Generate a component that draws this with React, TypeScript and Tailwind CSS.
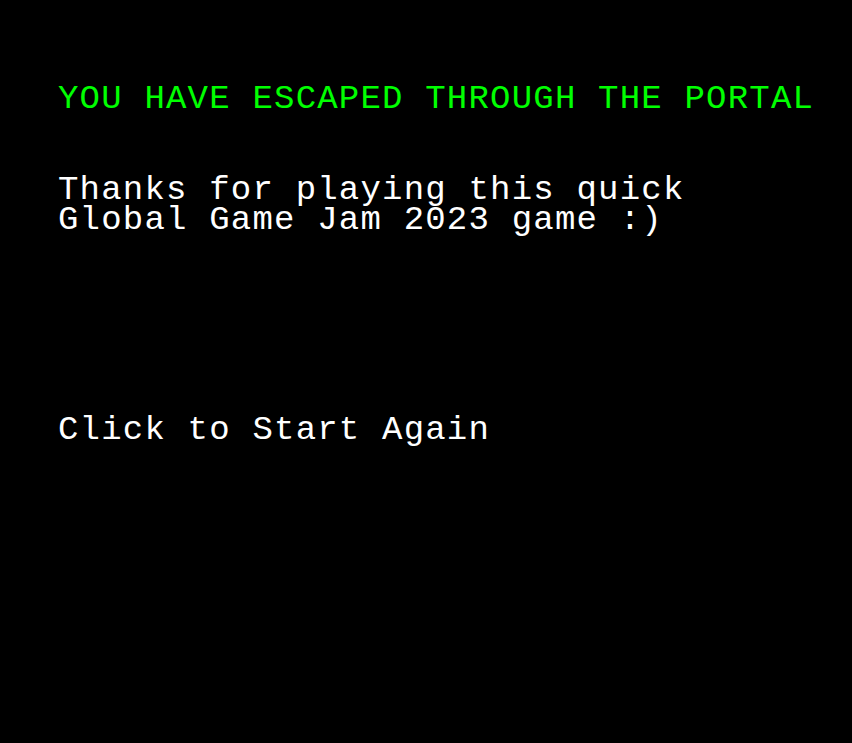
export default function App() {
  return (
    <div
      className="min-h-[743px] w-full bg-black pl-[58px] pt-[84px] text-[34px] leading-[30px] tracking-[1.2px] text-white"
      style={{ fontFamily: '"Liberation Mono", "DejaVu Sans Mono", monospace' }}
    >
      <p className="whitespace-pre text-[#00ff00]">YOU HAVE ESCAPED THROUGH THE PORTAL</p>
      <p className="mt-[61px] whitespace-pre">Thanks for playing this quick</p>
      <p className="whitespace-pre">Global Game Jam 2023 game :)</p>
      <p className="mt-[180px] cursor-pointer whitespace-pre">Click to Start Again</p>
    </div>
  );
}
